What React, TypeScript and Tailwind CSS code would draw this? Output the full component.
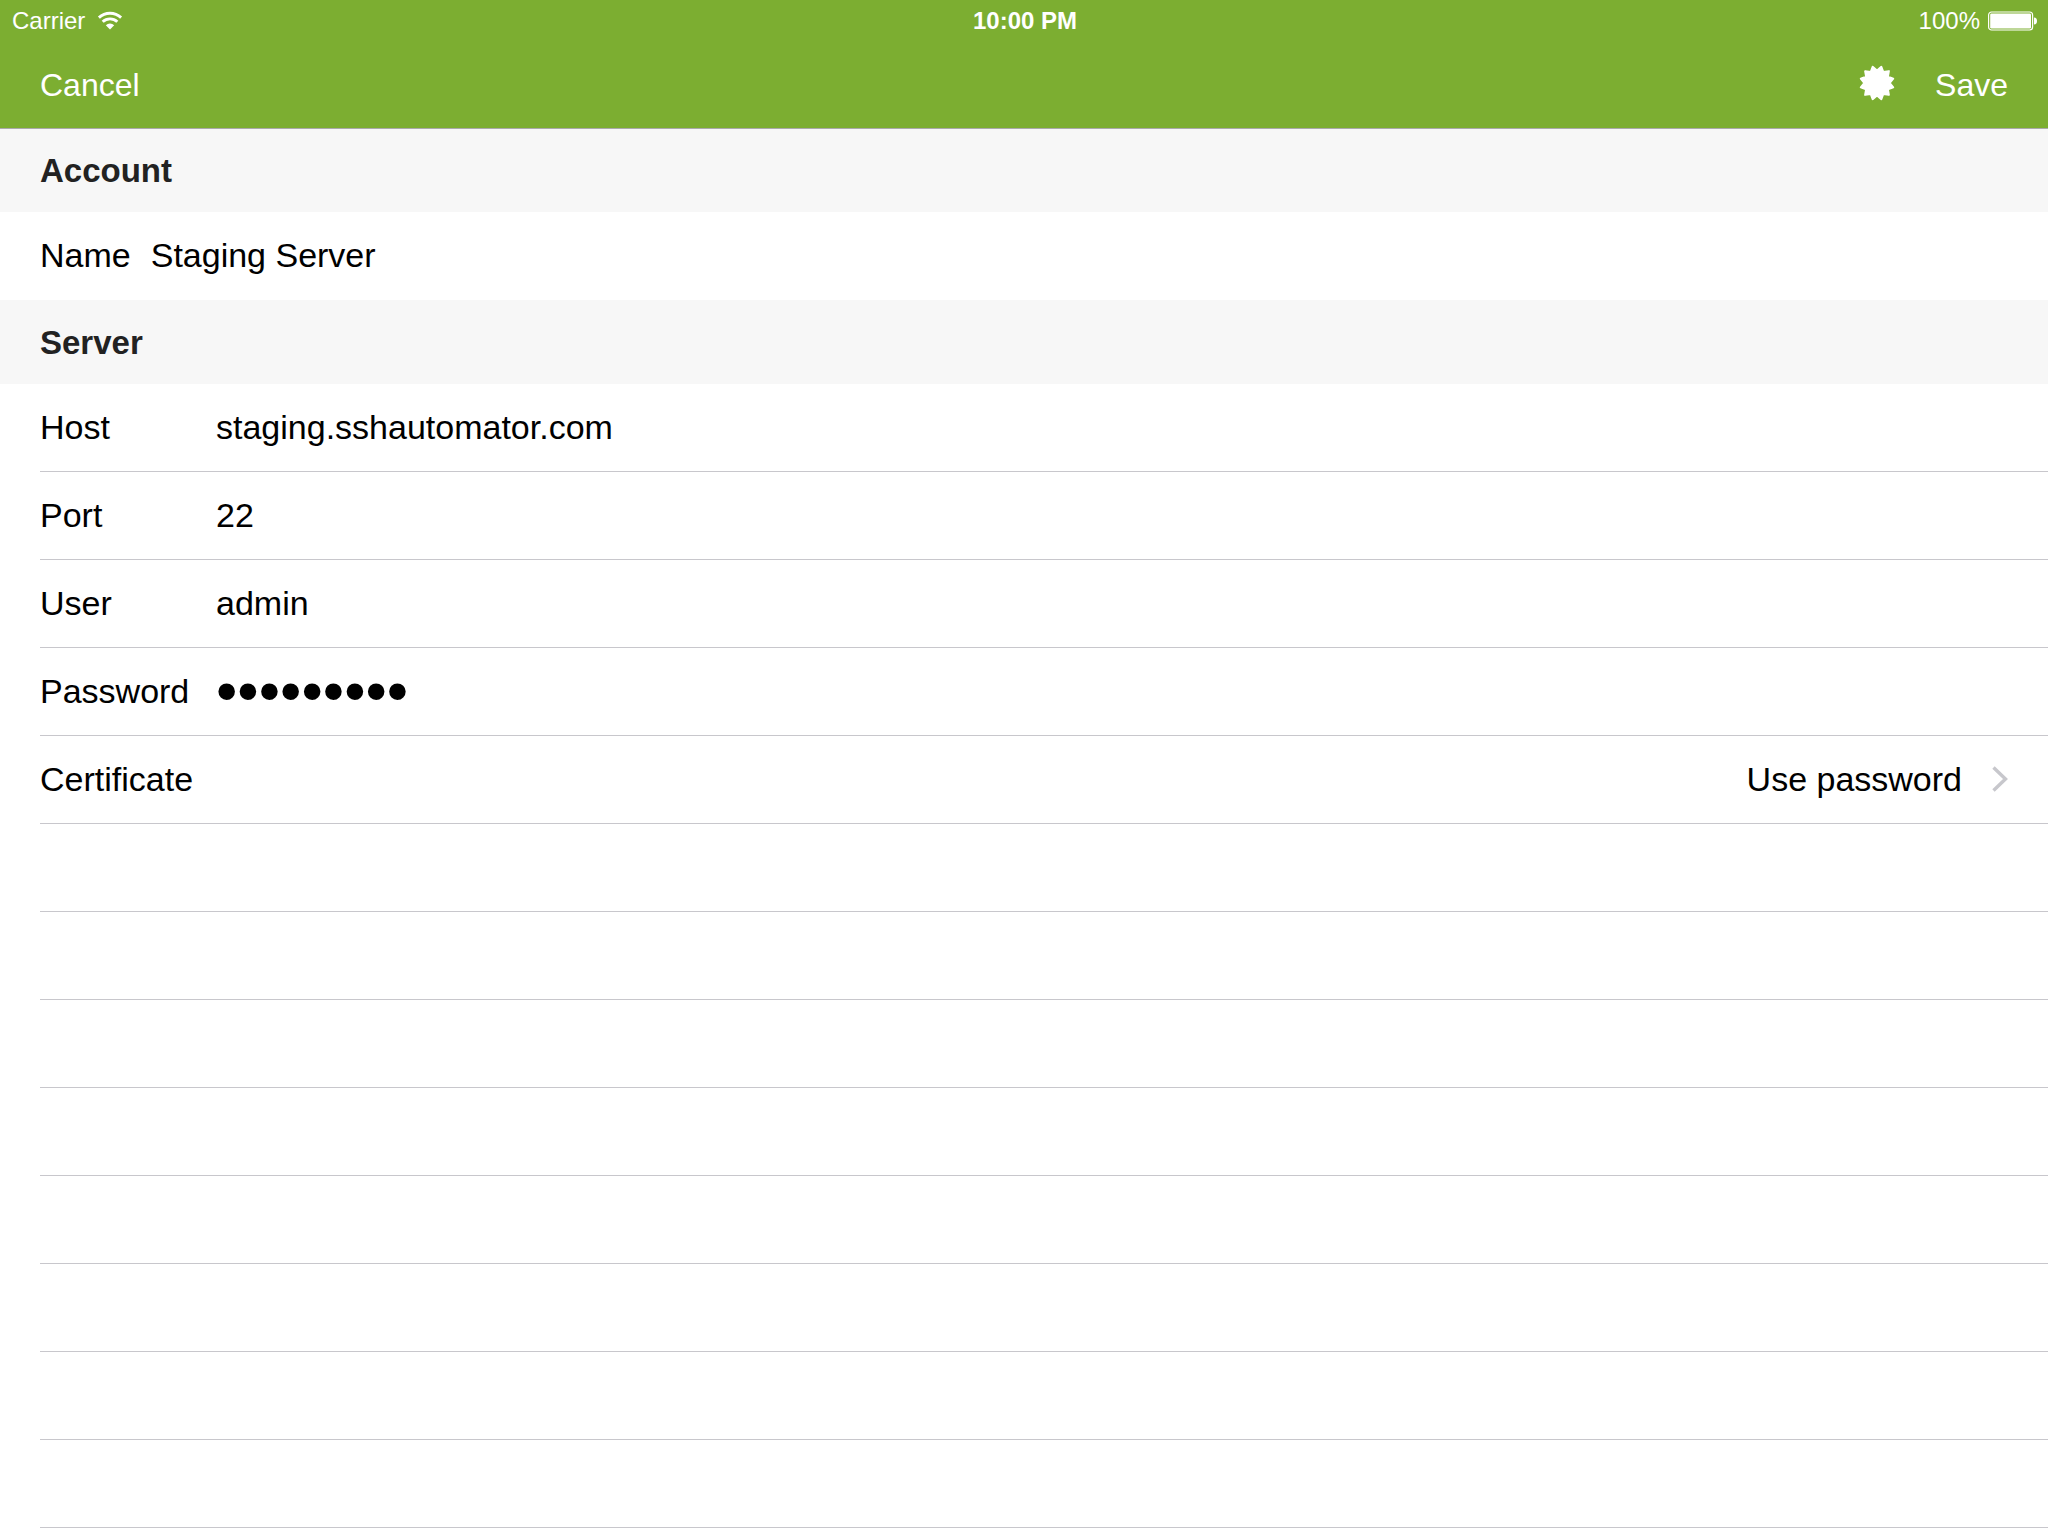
import { useState } from "react";

type FieldProps = {
  id: string;
  label: string;
  initial: string;
  type?: string;
  fixedLabel?: boolean;
};

function Field({ id, label, initial, type = "text", fixedLabel = true }: FieldProps) {
  const [value, setValue] = useState(initial);
  return (
    <div className="flex h-full items-center pb-0.5">
      <label htmlFor={id} className={fixedLabel ? "w-44 shrink-0" : "mr-5 shrink-0"}>
        {label}
      </label>
      <input
        id={id}
        type={type}
        value={value}
        onChange={(e) => setValue(e.target.value)}
        className={
          type === "password"
            ? "h-full min-w-0 flex-1 bg-transparent text-[61px] outline-none"
            : "h-10 min-w-0 flex-1 bg-transparent outline-none"
        }
      />
    </div>
  );
}

function SectionHeader({ title, divided = false }: { title: string; divided?: boolean }) {
  return (
    <h2
      className={`flex h-21 items-center bg-[#f7f7f7] px-10 text-[33px] leading-10 font-bold text-[#222222] ${
        divided ? "border-t border-[#aaaaaa] pt-px" : "pt-0.5"
      }`}
    >
      {title}
    </h2>
  );
}

function WifiIcon() {
  return (
    <svg viewBox="0 0 26 20" className="h-5 w-[26px]" fill="none" stroke="white" aria-hidden="true">
      <path d="M1.9 6.6A16.4 16.4 0 0 1 24.1 6.6" strokeWidth="2.9" />
      <path d="M5.7 10.8A10.6 10.6 0 0 1 20.3 10.8" strokeWidth="2.9" />
      <path d="M13 18.6L8.8 14.2A6.2 6.2 0 0 1 17.2 14.2Z" fill="white" stroke="none" />
    </svg>
  );
}

function BatteryIcon() {
  return (
    <svg viewBox="0 0 50 20" className="h-5 w-[50px]" aria-hidden="true">
      <rect x="0.6" y="1" width="44" height="18" rx="3" fill="none" stroke="white" strokeWidth="1.2" />
      <rect x="2.2" y="2.6" width="40.8" height="14.8" rx="1.2" fill="white" />
      <path d="M46 6.5C48.2 6.5 49 8 49 10S48.2 13.5 46 13.5Z" fill="white" />
    </svg>
  );
}

const sealPoints = Array.from({ length: 24 }, (_, i) => {
  const angle = (i * Math.PI) / 12;
  const radius = i % 2 === 0 ? 12.6 : 16.8;
  return `${18 + radius * Math.sin(angle)},${18 - radius * Math.cos(angle)}`;
}).join(" ");

function SealIcon() {
  return (
    <svg viewBox="0 0 36 36" className="size-9" aria-hidden="true">
      <polygon points={sealPoints} fill="white" stroke="white" strokeWidth="2" strokeLinejoin="round" />
    </svg>
  );
}

export default function App() {
  return (
    <div
      className="flex h-screen flex-col overflow-hidden bg-white text-[34px] leading-10 text-black"
      style={{ fontFamily: '"Liberation Sans", Arial, sans-serif' }}
    >
      <header className="bg-[#7cae31] text-white">
        <div className="grid h-10 grid-cols-3 items-center pt-0.5 pr-2.5 pl-3 text-2xl leading-7">
          <div className="flex items-center gap-3">
            <span>Carrier</span>
            <WifiIcon />
          </div>
          <time className="text-center font-bold">10:00 PM</time>
          <div className="flex items-center justify-end gap-2">
            <span>100%</span>
            <BatteryIcon />
          </div>
        </div>
        <nav className="flex h-22 items-center justify-between px-10 text-[32px]">
          <button type="button" className="pt-0.5">Cancel</button>
          <div className="flex items-center gap-10">
            <button type="button" aria-label="Certificates" className="pb-0.5">
              <SealIcon />
            </button>
            <button type="button" className="pt-0.5">Save</button>
          </div>
        </nav>
      </header>

      <main>
        <section>
          <SectionHeader title="Account" divided />
          <div className="h-22 pl-10">
            <Field id="name" label="Name" initial="Staging Server" fixedLabel={false} />
          </div>
        </section>

        <section>
          <SectionHeader title="Server" />
          <ul className="pl-10">
            <li className="h-22 border-b border-[#c8c7cc]">
              <Field id="host" label="Host" initial="staging.sshautomator.com" />
            </li>
            <li className="h-22 border-b border-[#c8c7cc]">
              <Field id="port" label="Port" initial="22" />
            </li>
            <li className="h-22 border-b border-[#c8c7cc]">
              <Field id="user" label="User" initial="admin" />
            </li>
            <li className="h-22 border-b border-[#c8c7cc]">
              <Field id="password" label="Password" initial="automator" type="password" />
            </li>
            <li className="h-22 border-b border-[#c8c7cc]">
              <button type="button" className="flex h-full w-full items-center pr-10 pb-0.5 text-left">
                <span className="flex-1">Certificate</span>
                <span>Use password</span>
                <svg viewBox="0 0 16 26" className="ml-[30px] h-[26px] w-4" fill="none" aria-hidden="true">
                  <path d="M1.5 1.5L13.5 13L1.5 24.5" stroke="#c7c7cc" strokeWidth="3.4" />
                </svg>
              </button>
            </li>
            {Array.from({ length: 8 }, (_, i) => (
              <li key={i} aria-hidden="true" className="h-22 border-b border-[#c8c7cc]" />
            ))}
          </ul>
        </section>
      </main>
    </div>
  );
}
